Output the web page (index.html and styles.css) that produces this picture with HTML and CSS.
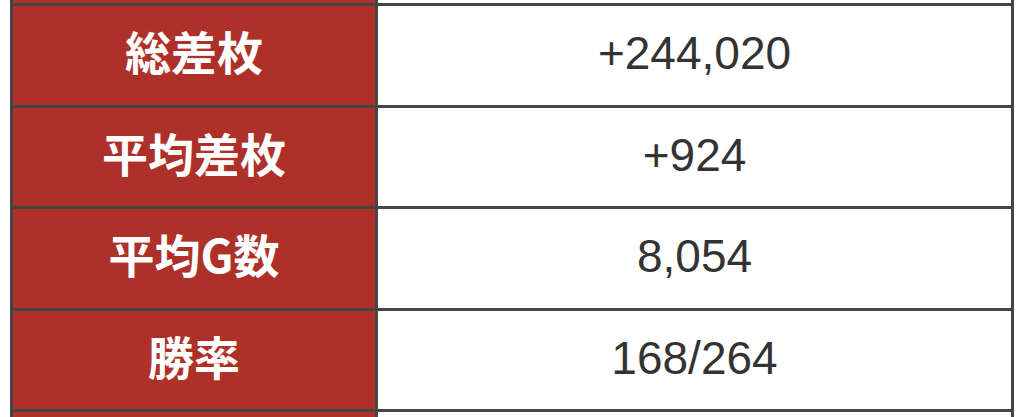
FILE: index.html
```html
<!DOCTYPE html>
<html lang="ja">
<head>
<meta charset="utf-8">
<title>データ</title>
<link rel="stylesheet" href="styles.css">
</head>
<body>
<div class="table">
  <div class="label"></div><div class="value"></div>
  <div class="label">総差枚</div><div class="value">+244,020</div>
  <div class="label">平均差枚</div><div class="value">+924</div>
  <div class="label">平均G数</div><div class="value">8,054</div>
  <div class="label">勝率</div><div class="value">168/264</div>
  <div class="label"></div><div class="value"></div>
</div>
</body>
</html>
```
FILE: styles.css
```css
html, body {
  margin: 0;
  padding: 0;
  background: #ffffff;
  overflow: hidden;
  height: 417px;
}
.table {
  display: grid;
  grid-template-columns: 362px 633px;
  grid-auto-rows: 98.5px;
  gap: 3px;
  padding: 0 3px;
  background: #454545;
  width: 998px;
  margin: -95.5px 0 0 10px;
}
.label {
  background: #ad3129;
  color: #ffffff;
  font-family: "Noto Sans CJK JP", "Noto Sans", sans-serif;
  font-weight: 700;
  font-size: 46px;
  display: flex;
  align-items: center;
  justify-content: center;
  padding-bottom: 10px;
  box-sizing: border-box;
}
.value {
  background: #ffffff;
  color: #333333;
  font-family: "Liberation Sans", Arial, sans-serif;
  font-size: 46px;
  display: flex;
  align-items: center;
  justify-content: center;
  padding-bottom: 4px;
  box-sizing: border-box;
}
```
